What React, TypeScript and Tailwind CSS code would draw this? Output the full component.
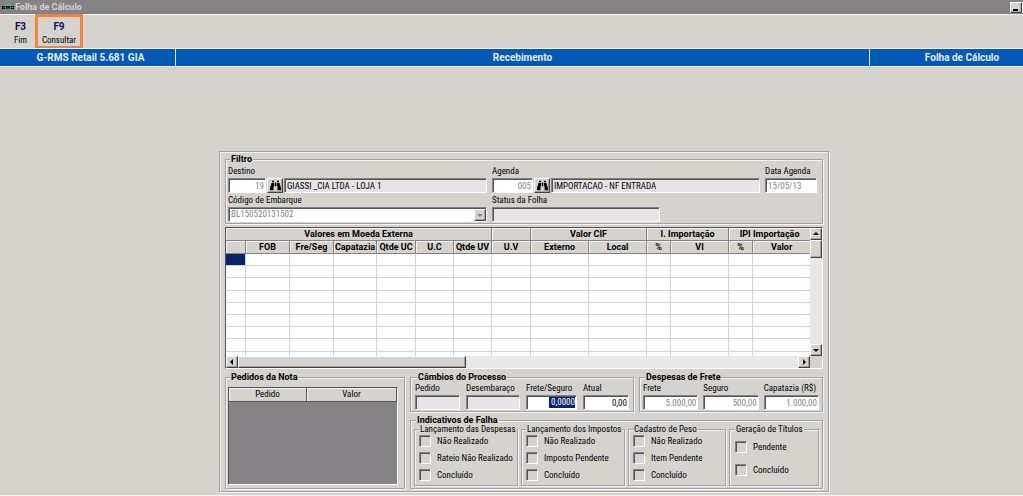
import type { ReactNode } from "react";
import { FaBinoculars } from "react-icons/fa";

const sunken =
  "border border-t-[#848284] border-l-[#848284] border-b-white border-r-white shadow-[inset_1px_1px_0_#55535a]";
const raised =
  "border border-t-white border-l-white border-b-[#424142] border-r-[#424142] bg-[#d6d3ce] shadow-[inset_-1px_-1px_0_#a5a2a5]";

function Group({
  title,
  className = "",
  small = false,
  children,
}: {
  title: string;
  className?: string;
  small?: boolean;
  children: ReactNode;
}) {
  return (
    <fieldset
      className={`min-w-0 border border-[#a5a2a5] shadow-[1px_1px_0_#f4f2ee,inset_1px_1px_0_#f4f2ee] ${className}`}
    >
      <legend
        className={
          small
            ? "bg-[#d6d3ce] px-px leading-[8px] whitespace-nowrap"
            : "ml-[2px] bg-[#d6d3ce] px-px font-['Roboto','Liberation_Sans',sans-serif] leading-[10px] font-bold"
        }
      >
        {title}
      </legend>
      {children}
    </fieldset>
  );
}

function Label({ htmlFor, children }: { htmlFor: string; children: ReactNode }) {
  return (
    <label htmlFor={htmlFor} className="block h-3 leading-[10px] whitespace-nowrap">
      {children}
    </label>
  );
}

function TextBox({
  id,
  value = "",
  label,
  className = "",
}: {
  id: string;
  value?: string;
  label?: string;
  className?: string;
}) {
  return (
    <input
      id={id}
      aria-label={label}
      readOnly
      value={value}
      className={`h-[15px] min-w-0 rounded-none pr-px pl-[2px] outline-none ${sunken} ${className}`}
    />
  );
}

function SearchButton({ label }: { label: string }) {
  return (
    <button
      type="button"
      aria-label={label}
      className={`flex h-[15px] w-4 shrink-0 items-center justify-center ${raised}`}
    >
      <FaBinoculars className="size-[11px] text-black" />
    </button>
  );
}

function Check({ id, children }: { id: string; children: ReactNode }) {
  return (
    <div className="flex items-center gap-[6px]">
      <input
        id={id}
        type="checkbox"
        className={`size-3 shrink-0 appearance-none bg-[#d6d3ce] ${sunken}`}
      />
      <label htmlFor={id} className="leading-[11px] whitespace-nowrap">
        {children}
      </label>
    </div>
  );
}

function Arrow({ dir, className = "text-black" }: { dir: "up" | "down" | "left" | "right"; className?: string }) {
  const d = { up: "M0 4h6L3 1z", down: "M0 2h6L3 5z", left: "M4 0v6L1 3z", right: "M2 0v6l3-3z" }[dir];
  return (
    <svg viewBox="0 0 6 6" className={`size-[6px] fill-current ${className}`}>
      <path d={d} />
    </svg>
  );
}

function ScrollButton({ dir, label }: { dir: "up" | "down" | "left" | "right"; label: string }) {
  return (
    <button
      type="button"
      aria-label={label}
      className={`flex size-3 shrink-0 items-center justify-center ${raised}`}
    >
      <Arrow dir={dir} />
    </button>
  );
}

const columns = [
  { name: "", width: 20 },
  { name: "FOB", width: 44 },
  { name: "Fre/Seg", width: 44 },
  { name: "Capatazia", width: 43 },
  { name: "Qtde UC", width: 39 },
  { name: "U.C", width: 38 },
  { name: "Qtde UV", width: 38 },
  { name: "U.V", width: 39 },
  { name: "Externo", width: 58 },
  { name: "Local", width: 58 },
  { name: "%", width: 24 },
  { name: "VI", width: 58 },
  { name: "%", width: 24 },
  { name: "Valor", width: 58 },
];

const headCell =
  "h-[13px] overflow-hidden border-r border-b border-[#848284] bg-[#d6d3ce] p-0 text-center font-bold whitespace-nowrap shadow-[inset_1px_1px_0_#f4f2ee]";

function ValuesGrid() {
  return (
    <div className="mt-[3px] grid h-[142px] grid-cols-[1fr_12px] grid-rows-[1fr_12px] border border-[#55535a] border-r-white border-b-white bg-[#e9e7e3]">
      <div className="overflow-hidden bg-white">
        <table className="h-[148px] w-full table-fixed border-separate border-spacing-0 font-['Roboto','Liberation_Sans',sans-serif] leading-[11px]">
          <colgroup>
            {columns.map((c, i) => (
              <col key={i} style={{ width: c.width }} />
            ))}
          </colgroup>
          <thead>
            <tr>
              <th colSpan={7} className={headCell}>Valores em Moeda Externa</th>
              <th className={headCell} />
              <th colSpan={2} className={headCell}>Valor CIF</th>
              <th colSpan={2} className={headCell}>I. Importação</th>
              <th colSpan={2} className={headCell}>IPI Importação</th>
            </tr>
            <tr>
              {columns.map((c, i) => (
                <th key={i} className={headCell}>{c.name}</th>
              ))}
            </tr>
          </thead>
          <tbody>
            {Array.from({ length: 10 }, (_, r) => (
              <tr key={r}>
                {columns.map((_, i) => (
                  <td
                    key={i}
                    className={`border-r border-b border-[#d3d1d3] p-0 ${r === 0 && i === 0 ? "bg-[#08246b]" : ""}`}
                  />
                ))}
              </tr>
            ))}
          </tbody>
        </table>
      </div>
      <div className="flex flex-col">
        <ScrollButton dir="up" label="Rolar para cima" />
        <div className={`h-[18px] ${raised}`} />
        <div className="flex-1" />
        <ScrollButton dir="down" label="Rolar para baixo" />
      </div>
      <div className="flex">
        <ScrollButton dir="left" label="Rolar para a esquerda" />
        <div className={`w-[228px] ${raised}`} />
        <div className="flex-1" />
        <ScrollButton dir="right" label="Rolar para a direita" />
      </div>
      <div className="bg-[#d6d3ce]" />
    </div>
  );
}

function FilterGroup() {
  return (
    <Group title="Filtro" className="h-[70px] pt-[2px] pr-[5px] pl-[2px]">
      <div className="grid grid-cols-[259px_268px_1fr] gap-x-[5px] gap-y-[2px]">
        <div>
          <Label htmlFor="destino">Destino</Label>
          <div className="flex gap-px">
            <TextBox id="destino" value="19" className="w-[38px] bg-white text-right text-[#848284]" />
            <SearchButton label="Procurar destino" />
            <TextBox id="destino-nome" label="Nome do destino" value="GIASSI _CIA LTDA - LOJA 1" className="flex-1 bg-[#e7e3e7]" />
          </div>
        </div>
        <div>
          <Label htmlFor="agenda">Agenda</Label>
          <div className="flex gap-px">
            <TextBox id="agenda" value="005" className="w-[41px] bg-white text-right text-[#848284]" />
            <SearchButton label="Procurar agenda" />
            <TextBox id="agenda-nome" label="Nome da agenda" value="IMPORTACAO - NF ENTRADA" className="flex-1 bg-[#e7e3e7]" />
          </div>
        </div>
        <div>
          <Label htmlFor="data">Data Agenda</Label>
          <TextBox id="data" value="15/05/13" className="block w-full bg-white text-[#848284]" />
        </div>
        <div>
          <Label htmlFor="embarque">Código de Embarque</Label>
          <div className="relative">
            <select
              id="embarque"
              disabled
              className={`block h-[15px] w-full appearance-none rounded-none bg-white px-[2px] text-[#848284] opacity-100 ${sunken}`}
            >
              <option>BL150520131502</option>
            </select>
            <span className={`pointer-events-none absolute top-[2px] right-px flex h-3 w-3 items-center justify-center ${raised}`}>
              <Arrow dir="down" className="text-[#848284]" />
            </span>
          </div>
        </div>
        <div>
          <Label htmlFor="status">Status da Folha</Label>
          <TextBox id="status" className="block w-[168px] bg-[#e7e3e7]" />
        </div>
      </div>
    </Group>
  );
}

function OrdersGroup() {
  const cell = "h-[14px] border-r border-b border-[#55535a] bg-[#d6d3ce] p-0 text-center font-normal shadow-[inset_1px_1px_0_#f4f2ee]";
  return (
    <Group title="Pedidos da Nota" className="px-[2px] pt-[5px] pb-[2px]">
      <div className="mr-1 h-[98px] border border-[#55535a] border-r-white border-b-white bg-[#848284]">
        <table className="w-full table-fixed border-separate border-spacing-0">
          <thead>
            <tr>
              <th className={`w-[78px] ${cell}`}>Pedido</th>
              <th className={cell}>Valor</th>
            </tr>
          </thead>
        </table>
      </div>
    </Group>
  );
}

export default function App() {
  return (
    <div className="h-screen overflow-hidden bg-[#d6d3ce] font-['Roboto_Condensed','Roboto','Liberation_Sans',sans-serif] text-[9px] leading-[11px] text-black">
      <div className="flex h-full w-[calc(100%+25px)] flex-col border-b border-[#f4f2ee]">
        <header className="flex h-[14px] shrink-0 items-center bg-[#848284] pl-px text-[#d6d3ce]">
          <svg viewBox="0 0 14 12" className="h-3 w-[14px]" aria-hidden="true">
            <path d="M5 4 L9 0.500 L8.500 3.500 L11 3 L8 7.500 L8.500 11 L6.500 8 L5 8.500z" fill="#21c79c" />
            <path
              d="M1 5h3v1.500H2V7h2v1H1zM5 5h4v3H8V6.500H7.500V8h-1V6.500H6V8H5zM10 5h3v1h-2v.5h2V8h-3V7h2v-.5h-2z"
              fill="#101010"
            />
          </svg>
          <h1 className="font-['Roboto','Liberation_Sans',sans-serif] text-[9px] leading-[12px] font-bold">Folha de Cálculo</h1>
          <button
            type="button"
            aria-label="Minimizar"
            className={`mr-[26px] ml-auto flex h-[11px] w-3 items-end pb-px pl-[2px] ${raised}`}
          >
            <span className="h-[2px] w-[5px] bg-black" />
          </button>
          <span className="-ml-[26px] h-[11px] w-[26px] border-l border-white bg-[#d6d3ce]" />
        </header>

        <nav className="flex h-[34px] shrink-0 border-t border-[#f4f2ee] pl-[6px]">
          <button type="button" className="flex w-[29px] flex-col items-center pt-[5px]">
            <b className="font-['Roboto','Liberation_Sans',sans-serif] text-[10px] leading-[13px] text-[#10105a]">F3</b>
            <span className="leading-[14px]">Fim</span>
          </button>
          <button type="button" className="-mt-px flex h-[35px] w-12 flex-col items-center border-[3px] border-[#f7823a] pt-[3px]">
            <b className="font-['Roboto','Liberation_Sans',sans-serif] text-[10px] leading-[13px] text-[#10105a]">F9</b>
            <span className="leading-[14px]">Consultar</span>
          </button>
        </nav>

        <div className="grid h-[19px] shrink-0 grid-cols-[176px_1fr_178px] border-y border-[#f4f2ee] bg-[#0059b5] text-center font-['Roboto','Liberation_Sans',sans-serif] text-[10px] leading-[18px] font-bold text-[#e7ebef]">
          <div className="border-r border-[#e7ebef] pl-[6px]">G-RMS Retail 5.681 GIA</div>
          <div className="border-r border-[#e7ebef]">Recebimento</div>
          <div className="pl-[6px]">Folha de Cálculo</div>
        </div>

        <main className="mx-auto mt-auto mb-[3px] w-[610px] border border-[#a5a2a5] px-[5px] pt-[2px] pb-[2px] shadow-[1px_1px_0_#f4f2ee,inset_1px_1px_0_#f4f2ee]">
          <FilterGroup />
          <ValuesGrid />
          <div className="mt-[3px] grid grid-cols-[180px_1fr] gap-[5px]">
            <OrdersGroup />
            <div className="flex flex-col gap-[3px]">
              <div className="grid grid-cols-[224px_1fr] gap-[5px]">
                <Group title="Câmbios do Processo" className="px-1 pt-px pb-px">
                  <div className="grid grid-cols-[45px_54px_51px_1fr] gap-x-[6px]">
                    <div>
                      <Label htmlFor="cambio-pedido">Pedido</Label>
                      <TextBox id="cambio-pedido" className="block w-full bg-[#e7e3e7]" />
                    </div>
                    <div>
                      <Label htmlFor="desembaraco">Desembaraço</Label>
                      <TextBox id="desembaraco" className="block w-full bg-[#e7e3e7]" />
                    </div>
                    <div>
                      <Label htmlFor="frete-seguro">Frete/Seguro</Label>
                      <div className={`flex h-[15px] items-center justify-end bg-white pr-px ${sunken}`}>
                        <input
                          id="frete-seguro"
                          readOnly
                          value="0,0000"
                          className="h-[11px] w-[26px] bg-[#08246b] text-right text-white outline-none"
                        />
                      </div>
                    </div>
                    <div>
                      <Label htmlFor="atual">Atual</Label>
                      <TextBox id="atual" value="0,00" className="block w-full bg-white text-right" />
                    </div>
                  </div>
                </Group>
                <Group title="Despesas de Frete" className="px-[3px] pt-px pb-px">
                  <div className="grid grid-cols-3 gap-x-[5px]">
                    <div>
                      <Label htmlFor="frete">Frete</Label>
                      <TextBox id="frete" value="5.000,00" className="block w-full bg-white text-right text-[#848284]" />
                    </div>
                    <div>
                      <Label htmlFor="seguro">Seguro</Label>
                      <TextBox id="seguro" value="500,00" className="block w-full bg-white text-right text-[#848284]" />
                    </div>
                    <div>
                      <Label htmlFor="capatazia">Capatazia (R$)</Label>
                      <TextBox id="capatazia" value="1.000,00" className="block w-full bg-white text-right text-[#848284]" />
                    </div>
                  </div>
                </Group>
              </div>
              <Group title="Indicativos de Falha" className="px-[3px] pb-[2px]">
                <div className="grid grid-cols-[104px_104px_98px_1fr] gap-x-[3px]">
                  <Group small title="Lançamento das Despesas" className="h-[61px] pt-[2px] pl-1">
                    <div className="flex flex-col gap-[5px]">
                      <Check id="desp-nao">Não Realizado</Check>
                      <Check id="desp-rateio">Rateio Não Realizado</Check>
                      <Check id="desp-ok">Concluído</Check>
                    </div>
                  </Group>
                  <Group small title="Lançamento dos Impostos" className="h-[61px] pt-[2px] pl-1">
                    <div className="flex flex-col gap-[5px]">
                      <Check id="imp-nao">Não Realizado</Check>
                      <Check id="imp-pend">Imposto Pendente</Check>
                      <Check id="imp-ok">Concluído</Check>
                    </div>
                  </Group>
                  <Group small title="Cadastro de Peso" className="h-[61px] pt-[2px] pl-1">
                    <div className="flex flex-col gap-[5px]">
                      <Check id="peso-nao">Não Realizado</Check>
                      <Check id="peso-item">Item Pendente</Check>
                      <Check id="peso-ok">Concluído</Check>
                    </div>
                  </Group>
                  <Group small title="Geração de Títulos" className="h-[61px] pt-[8px] pl-[5px]">
                    <div className="flex flex-col gap-[11px]">
                      <Check id="tit-pend">Pendente</Check>
                      <Check id="tit-ok">Concluído</Check>
                    </div>
                  </Group>
                </div>
              </Group>
            </div>
          </div>
        </main>
      </div>
    </div>
  );
}
